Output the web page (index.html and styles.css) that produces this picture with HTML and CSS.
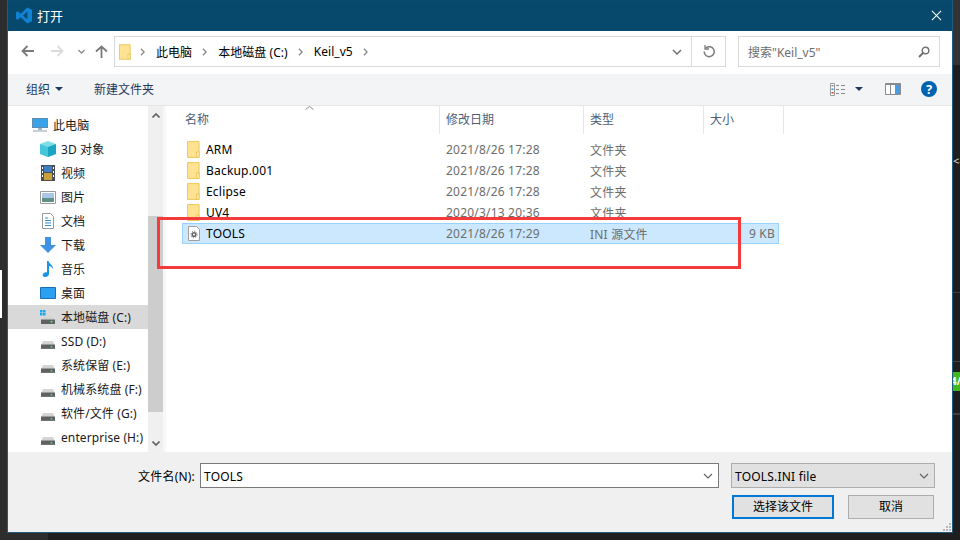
FILE: index.html
```html
<!DOCTYPE html>
<html>
	<head>
		<meta charset="UTF-8">
		<title>打开</title>
		<link rel="stylesheet" href="styles.css">
	</head>
	<body>
		<svg class="defs" width="0" height="0">
			<symbol id="folder" viewBox="0 0 14 18">
				<path d="M.5 .5h12.5v17H.5z" fill="#ffe393" stroke="#eac44f"/>
				<path d="M10.500 17.500v-6h2.500v6z" fill="#fff1c0" stroke="#eac44f"/>
			</symbol>
			<symbol id="drive" viewBox="0 0 16 10">
				<path d="M2.500 1h11L16 5.500H0z" fill="#d3d3d3"/>
				<path d="M0 5h16v5H0z" fill="#5f6264"/>
				<path d="M11 7h2v1.500h-2z" fill="#5fe05f"/>
			</symbol>
			<symbol id="chev" viewBox="0 0 6 10">
				<path d="M1 1l4 4-4 4" fill="none" stroke="#8a8a8a" stroke-width="1.600"/>
			</symbol>
		</svg>
		<div class="desktop">
			<i class="strip"></i>
			<i class="band"></i>
			<i class="rule rule1"></i>
			<i class="rule rule2"></i>
			<i class="rule rule3"></i>
			<i class="badge">4/</i>
			<i class="back-arrow">&lt;-</i>
			<i class="taskbar"></i>

			<div class="dialog">
				<div class="titlebar">
					<svg class="logo" width="16" height="17" viewBox="0 0 17 18">
						<path d="M12 .5L17 3v12l-5 2.500L5 10.800 1.800 13.400 0 12.500V5.500l1.800-.9L5 7.200zM12 5L7.500 9 12 13z" fill="#0f82d4"/>
					</svg>
					<span class="title">打开</span>
					<svg class="close" width="11" height="11" viewBox="0 0 12 12">
						<path d="M1 1l10 10M11 1L1 11" stroke="#fff" stroke-width="1.100"/>
					</svg>
				</div>

				<div class="nav">
					<div class="arrows">
						<svg width="13" height="12" viewBox="0 0 13 12"><path d="M6.500 1L1.500 6l5 5M2 6h11" fill="none" stroke="#7a7a7a" stroke-width="1.800"/></svg>
						<svg width="13" height="12" viewBox="0 0 13 12"><path d="M6.500 1l5 5-5 5M11 6H0" fill="none" stroke="#dcdcdc" stroke-width="1.800"/></svg>
						<svg class="down" width="7" height="5" viewBox="0 0 7 5"><path d="M.5 1l3 3 3-3" fill="none" stroke="#8a8a8a" stroke-width="1.400"/></svg>
						<svg class="up" width="13" height="13" viewBox="0 0 13 13"><path d="M1 6.500l5.500-5 5.500 5M6.500 2v11" fill="none" stroke="#7a7a7a" stroke-width="1.800"/></svg>
					</div>
					<div class="address">
						<svg class="crumb-icon" width="12" height="16"><use href="#folder"/></svg>
						<svg class="chev" width="5" height="8"><use href="#chev"/></svg>
						<span>此电脑</span>
						<svg class="chev" width="5" height="8"><use href="#chev"/></svg>
						<span>本地磁盘 (C:)</span>
						<svg class="chev" width="5" height="8"><use href="#chev"/></svg>
						<span>Keil_v5</span>
						<svg class="chev" width="5" height="8"><use href="#chev"/></svg>
						<div class="addr-btn addr-drop">
							<svg width="10" height="6" viewBox="0 0 10 6"><path d="M1 1l4 4 4-4" fill="none" stroke="#707070" stroke-width="1.500"/></svg>
						</div>
						<div class="addr-btn addr-refresh">
							<svg width="12" height="13" viewBox="0 0 12 13"><path d="M3 2.800a5 5 0 1 1-1.800 3.700" fill="none" stroke="#7a7a7a" stroke-width="1.500"/><path d="M2 0v4h4" fill="none" stroke="#7a7a7a" stroke-width="1.300"/></svg>
						</div>
					</div>
					<div class="search">
						<span>搜索"Keil_v5"</span>
						<svg width="12" height="12" viewBox="0 0 12 12"><circle cx="7.500" cy="4.500" r="3.300" fill="none" stroke="#707070" stroke-width="1.400"/><path d="M5 7l-4 4" stroke="#707070" stroke-width="1.900"/></svg>
					</div>
				</div>

				<div class="toolbar">
					<span class="tool">组织<i class="caret"></i></span>
					<span class="tool new-folder">新建文件夹</span>
					<div class="tool-right">
						<svg class="view-icon" width="16" height="13" viewBox="0 0 16 13">
							<path d="M.5 .5h4v12h-4z" fill="#fff" stroke="#9a9a9a"/>
							<path d="M1.500 2h2v1.500h-2z" fill="#8a8a8a"/>
							<path d="M1.500 5.500h2V7h-2z" fill="#3a8ad0"/>
							<path d="M1.500 9h2v1.500h-2z" fill="#d8353a"/>
							<path d="M6 2.500h3M11 2.500h4M6 6.500h3M11 6.500h4M6 10.500h3M11 10.500h4" stroke="#8a8a8a"/>
						</svg>
						<i class="caret"></i>
						<svg class="pane-icon" width="16" height="12" viewBox="0 0 16 12">
							<path d="M.5 .5h15v11H.5z" fill="#fff" stroke="#8a8a8a"/>
							<path d="M.5 .5h15v1.500H.5z" fill="#8a8a8a"/>
							<path d="M5.500 .5v11" stroke="#8a8a8a"/>
							<path d="M10 2h5v9h-5z" fill="#4a9de2"/>
						</svg>
						<span class="help">?</span>
					</div>
				</div>

				<div class="body">
					<div class="sidebar">
						<ul class="tree">
							<li class="top">
								<svg width="16" height="14" viewBox="0 0 16 14"><path d="M0 0h16v10H0z" fill="#5d8db0"/><path d="M1 1h14v8H1z" fill="#3aa2e8"/><path d="M6 10h4v2H6z" fill="#9fb4c4"/><path d="M1 12.500h14v1H1z" fill="#8ea3b3"/></svg>
								此电脑
							</li>
							<li>
								<svg width="16" height="16" viewBox="0 0 16 16"><path d="M8 0l8 3v10l-8 3-8-3V3z" fill="#7fdde6"/><path d="M8 6l8-3v10l-8 3z" fill="#1aa5c2"/><path d="M0 3l8 3v10l-8-3z" fill="#45c6d8"/></svg>
								3D 对象
							</li>
							<li>
								<svg width="14" height="16" viewBox="0 0 14 16"><path d="M0 0h14v16H0z" fill="#4a4f57"/><path d="M3 1h8v6H3z" fill="#3f7fc4"/><path d="M3 8h8v7H3z" fill="#c9a13b"/><path d="M1 2h1v2H1zM1 6h1v2H1zM1 10h1v2H1zM12 2h1v2h-1zM12 6h1v2h-1zM12 10h1v2h-1z" fill="#fff"/></svg>
								视频
							</li>
							<li>
								<svg width="16" height="13" viewBox="0 0 16 13"><path d="M.5 .5h15v12H.5z" fill="#fff" stroke="#9a9a9a"/><path d="M2 2h12v5H2z" fill="#a9c6e6"/><path d="M2 7h12v4H2z" fill="#5f8f86"/></svg>
								图片
							</li>
							<li>
								<svg width="12" height="16" viewBox="0 0 12 16"><path d="M.5 .5h8l3 3v12H.5z" fill="#fff" stroke="#9a9a9a"/><path d="M3 5h3M3 7.500h6M3 10h6M3 12.500h6" stroke="#2f8fd8"/></svg>
								文档
							</li>
							<li>
								<svg width="16" height="16" viewBox="0 0 16 16"><path d="M5 0h6v8h5l-8 8-8-8h5z" fill="#3f92e2"/></svg>
								下载
							</li>
							<li>
								<svg width="12" height="16" viewBox="0 0 12 16"><path d="M5 0h1.500c.5 3 5 4 4.500 8-1-2-2.500-3-4-3v8c0 2-2 3-4 3s-3-1.500-2-3 3-2 4-1.500z" fill="#1b93e6"/></svg>
								音乐
							</li>
							<li>
								<svg width="16" height="12" viewBox="0 0 16 12"><path d="M.5 .5h15v11H.5z" fill="#2ba0f0" stroke="#1b6fb5"/></svg>
								桌面
							</li>
							<li class="current">
								<svg width="16" height="14" viewBox="0 0 16 14"><path d="M0 0h2.500v2.500H0zM3 0h2.500v2.500H3zM0 3h2.500v2.500H0zM3 3h2.500v2.500H3z" fill="#19a7f0"/><path d="M3 7h10l2 2.500H1z" fill="#d3d3d3"/><path d="M1 9.500h14V14H1z" fill="#5f6264"/><path d="M10.500 11h2v1.500h-2z" fill="#5fe05f"/></svg>
								本地磁盘 (C:)
							</li>
							<li><svg class="drv" width="14" height="9"><use href="#drive"/></svg>SSD (D:)</li>
							<li><svg class="drv" width="14" height="9"><use href="#drive"/></svg>系统保留 (E:)</li>
							<li><svg class="drv" width="14" height="9"><use href="#drive"/></svg>机械系统盘 (F:)</li>
							<li><svg class="drv" width="14" height="9"><use href="#drive"/></svg>软件/文件 (G:)</li>
							<li><svg class="drv" width="14" height="9"><use href="#drive"/></svg>enterprise (H:)</li>
						</ul>
					</div>
					<div class="scrollbar">
						<svg width="8" height="5" viewBox="0 0 8 5"><path d="M.5 4.500L4 1l3.500 3.500" fill="none" stroke="#606060" stroke-width="1.600"/></svg>
						<div class="thumb"></div>
						<svg width="8" height="5" viewBox="0 0 8 5"><path d="M.5 .5L4 4 7.500 .5" fill="none" stroke="#606060" stroke-width="1.600"/></svg>
					</div>
					<div class="split"></div>
					<div class="main">
						<div class="head">
							<span class="name-col">名称
								<svg class="sort" width="9" height="4" viewBox="0 0 9 4"><path d="M.5 3.500L4.500 .5l4 3" fill="none" stroke="#8a8a8a"/></svg>
							</span>
							<span>修改日期</span>
							<span>类型</span>
							<span>大小</span>
						</div>
						<div class="rows">
							<div class="row"><span class="fname"><svg width="13" height="17"><use href="#folder"/></svg>ARM</span><span>2021/8/26 17:28</span><span>文件夹</span><span></span></div>
							<div class="row"><span class="fname"><svg width="13" height="17"><use href="#folder"/></svg>Backup.001</span><span>2021/8/26 17:28</span><span>文件夹</span><span></span></div>
							<div class="row"><span class="fname"><svg width="13" height="17"><use href="#folder"/></svg>Eclipse</span><span>2021/8/26 17:28</span><span>文件夹</span><span></span></div>
							<div class="row"><span class="fname"><svg width="13" height="17"><use href="#folder"/></svg>UV4</span><span>2020/3/13 20:36</span><span>文件夹</span><span></span></div>
							<div class="row selected">
								<span class="fname">
									<svg width="13" height="15" viewBox="0 0 13 15"><path d="M1.500 .5h8l3 3v11h-11z" fill="#fff" stroke="#a0a0a0"/><circle cx="7" cy="8.500" r="1.800" fill="none" stroke="#666" stroke-width="1.500"/><circle cx="7" cy="8.500" r="3.200" fill="none" stroke="#666" stroke-dasharray="1 1.500"/></svg>TOOLS
								</span>
								<span>2021/8/26 17:29</span>
								<span>INI 源文件</span>
								<span class="size">9 KB</span>
							</div>
						</div>
					</div>
				</div>

				<div class="footer">
					<div class="file-row">
						<label class="file-label">文件名(N):</label>
						<div class="file-input">
							<span>TOOLS</span>
							<svg width="10" height="6" viewBox="0 0 10 6"><path d="M1 1l4 4 4-4" fill="none" stroke="#606060" stroke-width="1.100"/></svg>
						</div>
						<div class="file-type">
							<span>TOOLS.INI file</span>
							<svg width="10" height="6" viewBox="0 0 10 6"><path d="M1 1l4 4 4-4" fill="none" stroke="#606060" stroke-width="1.100"/></svg>
						</div>
					</div>
					<div class="btn-row">
						<button class="btn primary">选择该文件</button>
						<button class="btn">取消</button>
					</div>
					<svg class="grip" width="8" height="8" viewBox="0 0 8 8"><path d="M6 0h2v2H6zM3 3h2v2H3zM6 3h2v2H6zM0 6h2v2H0zM3 6h2v2H3zM6 6h2v2H6z" fill="#b8b8b8"/></svg>
				</div>

				<div class="highlight"></div>
			</div>
		</div>
	</body>
</html>
```

FILE: styles.css
```css
*{
	margin:0px;
	padding:0px;
	box-sizing:border-box;
	list-style:none;
}
body{
	width:960px;
	height:540px;
	overflow:hidden;
	font-family:"Noto Sans","Noto Sans CJK SC",sans-serif;
	font-size:13px;
	color:#000;
}
.defs{
	position:absolute;
}
.desktop{
	position:relative;
	width:960px;
	height:540px;
	background:#1e1e1e;
	padding-left:7px;
}

/* 背后的编辑器窗口 */
.desktop i{
	position:absolute;
	display:block;
	font-style:normal;
}
.strip{
	left:0px;
	top:0px;
	width:7px;
	height:533px;
	background:#2d2d2d;
}
.strip::after{
	content:"";
	position:absolute;
	left:0px;
	top:270px;
	width:2px;
	height:48px;
	background:#fff;
}
.band{
	left:953px;
	top:0px;
	width:7px;
	height:65px;
	background:#333;
}
.rule{
	left:953px;
	width:7px;
	height:1px;
	background:#404040;
}
.rule1{top:292px;}
.rule2{top:361px;}
.rule3{top:413px;height:2px;}
.badge{
	left:953px;
	top:372px;
	width:7px;
	height:19px;
	overflow:hidden;
	background:#3fb91f;
	color:#fff;
	font-size:10px;
	font-weight:bold;
	line-height:19px;
	text-indent:-2px;
	white-space:nowrap;
}
.back-arrow{
	left:953px;
	top:153px;
	width:7px;
	overflow:hidden;
	color:#ddd;
	font-size:11px;
	white-space:nowrap;
}
.desktop .taskbar{
	left:0px;
	top:533px;
	width:48px;
	height:7px;
	background:#2d2d2d;
}

/* 对话框 */
.dialog{
	position:relative;
	width:946px;
	height:533px;
	border:1px solid #1f5c80;
	border-top-color:#0a4a70;
	background:#fff;
	display:flex;
	flex-direction:column;
}
.titlebar{
	height:30px;
	flex:none;
	background:#07486d;
	color:#fff;
	display:flex;
	align-items:center;
	padding:0 10px 2px 8px;
}
.title{
	margin-left:5px;
	font-size:13px;
}
.close{
	margin-left:auto;
}

.nav{
	height:43px;
	flex:none;
	display:flex;
	align-items:flex-start;
	padding-top:5px;
}
.arrows{
	width:106px;
	height:30px;
	flex:none;
	padding-left:13px;
	display:flex;
	align-items:center;
	gap:17px;
}
.arrows .down{
	margin-left:-3px;
}
.arrows .up{
	margin-left:-7px;
}
.address{
	width:612px;
	height:31px;
	flex:none;
	border:1px solid #d9d9d9;
	display:flex;
	align-items:center;
	padding-left:4px;
	font-size:12px;
}
.crumb-icon{
	margin-right:9px;
}
.chev{
	margin:0 11px 0 0;
}
.address span{
	margin-right:10px;
	letter-spacing:.05px;
}
.addr-btn{
	height:29px;
	display:flex;
	align-items:center;
	justify-content:center;
}
.addr-drop{
	margin-left:auto;
	width:34px;
	padding-left:5px;
	border-right:1px solid #d9d9d9;
}
.addr-refresh{
	width:33px;
}
.search{
	width:202px;
	height:31px;
	flex:none;
	margin-left:12px;
	border:1px solid #d9d9d9;
	padding:0 9px;
	display:flex;
	align-items:center;
	justify-content:space-between;
	color:#6d6d6d;
	font-size:12px;
}

.toolbar{
	height:32px;
	flex:none;
	background:#f3f4f6;
	border-bottom:1px solid #e5e5e5;
	display:flex;
	align-items:center;
	padding:0 15px 1px 18px;
	color:#1e3a5f;
	font-size:12px;
}
.tool{
	display:flex;
	align-items:center;
}
.new-folder{
	margin-left:31px;
}
.caret{
	width:0px;
	height:0px;
	border-left:4px solid transparent;
	border-right:4px solid transparent;
	border-top:4px solid #1e3a5f;
	margin-left:5px;
}
.desktop .caret{
	position:static;
}
.tool-right{
	margin-left:auto;
	display:flex;
	align-items:center;
}
.tool-right .caret{
	margin-left:9px;
}
.pane-icon{
	margin-left:22px;
}
.help{
	width:16px;
	height:16px;
	margin-left:20px;
	border-radius:50%;
	background:#0063b1;
	color:#fff;
	font-size:13px;
	font-weight:bold;
	line-height:16px;
	text-align:center;
}

.body{
	flex:1;
	min-height:0;
	display:flex;
}
.sidebar{
	width:140px;
	flex:none;
	padding-top:7px;
	overflow:hidden;
}
.tree li{
	height:24px;
	padding-left:32px;
	display:flex;
	align-items:center;
	white-space:nowrap;
	font-size:12px;
	letter-spacing:.1px;
	color:#1a1a1a;
}
.tree li svg{
	width:16px;
	margin-right:5px;
	flex:none;
}
.tree li.top{
	padding-left:24px;
}
.tree li.current{
	background:#d9d9d9;
}
.tree li .drv{
	width:14px;
	margin:6px 6px 0 1px;
}
.scrollbar{
	width:15px;
	flex:none;
	background:#f0f0f0;
	position:relative;
	display:flex;
	flex-direction:column;
	justify-content:space-between;
	align-items:center;
	padding:7px 0 6px;
}
.thumb{
	position:absolute;
	left:0px;
	top:110px;
	width:15px;
	height:196px;
	background:#cdcdcd;
}
.split{
	width:3px;
	flex:none;
	background:#f7f7f7;
}
.main{
	flex:1;
	min-width:0;
}
.head{
	height:27px;
	display:grid;
	grid-template-columns:274px 144px 120px 80px;
	width:618px;
	color:#4c607a;
	font-size:12px;
}
.head span{
	padding-left:6px;
	border-right:1px solid #e5e5e5;
	line-height:28px;
	position:relative;
}
.head .name-col{
	padding-left:19px;
}
.sort{
	position:absolute;
	left:139px;
	top:0px;
}
.rows{
	margin:6px 0 0 16px;
	width:597px;
}
.row{
	height:21px;
	display:grid;
	grid-template-columns:257px 144px 120px 76px;
	align-items:center;
	color:#6d6d6d;
	font-size:12px;
	letter-spacing:.2px;
}
.row span{
	padding-left:7px;
	white-space:nowrap;
}
.row .fname{
	padding-left:5px;
	display:flex;
	align-items:center;
	gap:6px;
	color:#000;
}
.selected{
	background:#cce8ff;
	box-shadow:inset 0 0 0 1px #99d1ff;
}
.row .size{
	text-align:right;
	padding:0 4px 0 0;
}

.footer{
	height:80px;
	flex:none;
	background:#f0f0f0;
	position:relative;
	padding:11px 17px 0 0;
	font-size:12px;
}
.file-row{
	display:flex;
	align-items:center;
	height:25px;
}
.file-label{
	width:187px;
	text-align:right;
	margin-right:5px;
	letter-spacing:.2px;
}
.file-input,.file-type{
	height:25px;
	display:flex;
	align-items:center;
	justify-content:space-between;
	padding:0 5px 0 3px;
}
.file-input span,.file-type span{
	margin-top:1px;
	letter-spacing:.2px;
}
.file-input{
	width:519px;
	background:#fff;
	border:1px solid #7a7a7a;
}
.file-type{
	width:204px;
	margin-left:12px;
	background:#e1e1e1;
	border:1px solid #adadad;
}
.btn-row{
	display:flex;
	justify-content:flex-end;
	gap:14px;
	margin:7px 1px 0 0;
}
.btn{
	width:86px;
	height:24px;
	border:1px solid #adadad;
	background:#e1e1e1;
	font:inherit;
	color:#000;
	padding-bottom:2px;
}
.primary{
	width:102px;
	border:2px solid #0078d7;
}
.grip{
	position:absolute;
	right:1px;
	bottom:1px;
}

/* 红色标注框 */
.highlight{
	position:absolute;
	left:149px;
	top:216px;
	width:584px;
	height:52px;
	border:3px solid #f43b3b;
}
```
